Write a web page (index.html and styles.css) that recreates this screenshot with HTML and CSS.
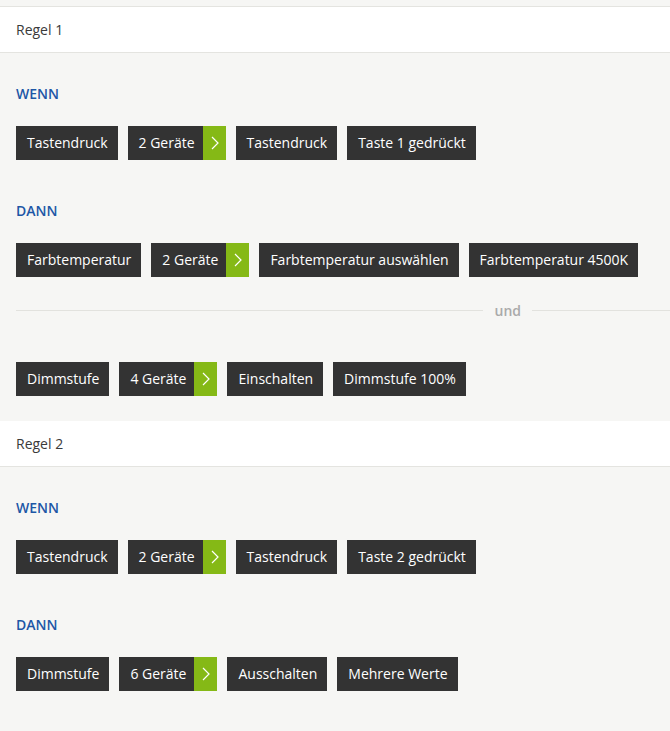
FILE: index.html
```html
<!DOCTYPE html>
<html lang="de">
<head>
<meta charset="utf-8">
<link rel="stylesheet" href="styles.css">
</head>
<body>
<div class="page">
  <section class="rule">
    <header class="rule-head">Regel 1</header>
    <div class="rule-body">
      <div class="group">
        <div class="label">WENN</div>
        <div class="chips">
          <span class="chip">Tastendruck</span>
          <span class="chip devices">2 Geräte<span class="go"><svg viewBox="0 0 23 34" width="23" height="34"><path d="M9 11 L15 17 L9 23" fill="none" stroke="#fff" stroke-width="1.2"/></svg></span></span>
          <span class="chip">Tastendruck</span>
          <span class="chip">Taste 1 gedrückt</span>
        </div>
      </div>
      <div class="group">
        <div class="label">DANN</div>
        <div class="chips">
          <span class="chip">Farbtemperatur</span>
          <span class="chip devices">2 Geräte<span class="go"><svg viewBox="0 0 23 34" width="23" height="34"><path d="M9 11 L15 17 L9 23" fill="none" stroke="#fff" stroke-width="1.2"/></svg></span></span>
          <span class="chip">Farbtemperatur auswählen</span>
          <span class="chip">Farbtemperatur 4500K</span>
        </div>
        <div class="divider"><span class="line"></span><span class="und">und</span><span class="line tail"></span></div>
        <div class="chips">
          <span class="chip">Dimmstufe</span>
          <span class="chip devices">4 Geräte<span class="go"><svg viewBox="0 0 23 34" width="23" height="34"><path d="M9 11 L15 17 L9 23" fill="none" stroke="#fff" stroke-width="1.2"/></svg></span></span>
          <span class="chip">Einschalten</span>
          <span class="chip">Dimmstufe 100%</span>
        </div>
      </div>
    </div>
  </section>
  <section class="rule">
    <header class="rule-head">Regel 2</header>
    <div class="rule-body">
      <div class="group">
        <div class="label">WENN</div>
        <div class="chips">
          <span class="chip">Tastendruck</span>
          <span class="chip devices">2 Geräte<span class="go"><svg viewBox="0 0 23 34" width="23" height="34"><path d="M9 11 L15 17 L9 23" fill="none" stroke="#fff" stroke-width="1.2"/></svg></span></span>
          <span class="chip">Tastendruck</span>
          <span class="chip">Taste 2 gedrückt</span>
        </div>
      </div>
      <div class="group">
        <div class="label">DANN</div>
        <div class="chips">
          <span class="chip">Dimmstufe</span>
          <span class="chip devices">6 Geräte<span class="go"><svg viewBox="0 0 23 34" width="23" height="34"><path d="M9 11 L15 17 L9 23" fill="none" stroke="#fff" stroke-width="1.2"/></svg></span></span>
          <span class="chip">Ausschalten</span>
          <span class="chip">Mehrere Werte</span>
        </div>
      </div>
    </div>
  </section>
</div>
</body>
</html>
```
FILE: styles.css
```css
html, body {
  margin: 0;
  padding: 0;
  background: #f6f6f4;
  overflow: hidden;
}
body {
  font-family: "Open Sans", "Noto Sans", sans-serif;
  font-size: 14px;
  color: #333;
}
.page {
  padding-top: 6px;
}
.rule-head {
  background: #fff;
  border-top: 1px solid #e4e4e0;
  border-bottom: 1px solid #e4e4e0;
  height: 45px;
  line-height: 45px;
  padding: 0 16px;
  color: #3a3a3a;
}
.rule + .rule .rule-head {
  border-top: none;
}
.rule-body {
  padding: 30px 0 25px 16px;
  display: flex;
  flex-direction: column;
  gap: 40px;
}
.group {
  display: flex;
  flex-direction: column;
}
.label {
  font-weight: 600;
  color: #1d57a6;
  line-height: 20px;
  margin-top: 1px;
  margin-bottom: 22px;
}
.chips {
  display: flex;
  gap: 10px;
  flex-wrap: nowrap;
}
.chip {
  background: #333;
  color: #fff;
  height: 34px;
  line-height: 34px;
  padding: 0 10px 0 11px;
  white-space: nowrap;
  display: flex;
  align-items: center;
}
.chip.devices {
  padding-right: 0;
}
.go {
  display: block;
  width: 23px;
  height: 34px;
  background: #85b916;
  margin-left: 8px;
}
.go svg {
  display: block;
}
.divider {
  display: flex;
  align-items: center;
  height: 20px;
  margin: 23px 0 42px;
}
.line {
  flex: 1;
  height: 1px;
  background: #e2e2de;
}
.line.tail {
  flex: none;
  width: 138px;
}
.und {
  font-weight: 600;
  color: #aaa;
  padding: 0 11px;
}
```
